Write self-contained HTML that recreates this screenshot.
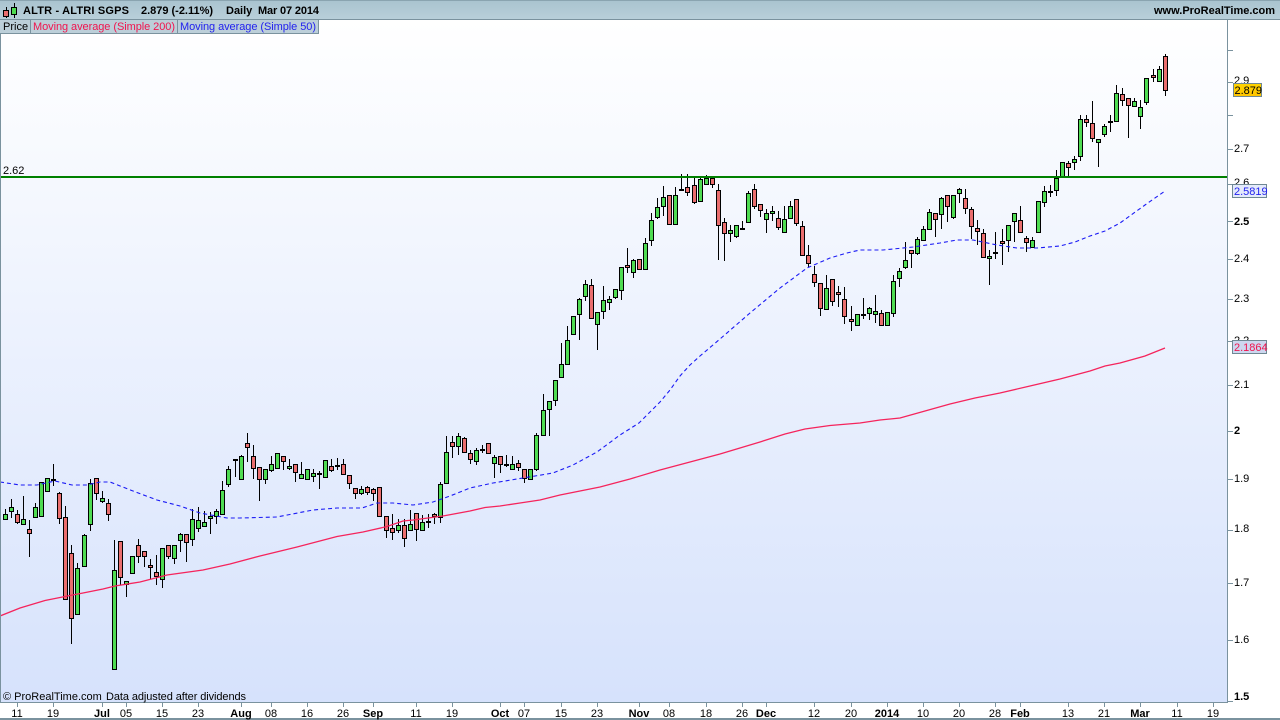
<!DOCTYPE html>
<html>
<head>
<meta charset="utf-8">
<title>ALTR - ALTRI SGPS</title>
<style>
html,body{margin:0;padding:0;background:#fff;width:1280px;height:720px;overflow:hidden}
svg{display:block;position:absolute;left:0;top:0}
text{font-family:"Liberation Sans",Arial,sans-serif;font-size:11px;fill:#000}
.b{font-weight:bold}
.m text{text-anchor:middle}
</style>
</head>
<body>
<svg width="1280" height="720" viewBox="0 0 1280 720" xmlns="http://www.w3.org/2000/svg">
<defs>
<linearGradient id="bg" x1="0" y1="0" x2="0" y2="1"><stop offset="0" stop-color="#ffffff"/><stop offset="1" stop-color="#d6e2fc"/></linearGradient>
<linearGradient id="hd" x1="0" y1="0" x2="0" y2="1"><stop offset="0" stop-color="#a9c3cf"/><stop offset="1" stop-color="#b9d0da"/></linearGradient>
<linearGradient id="gold" x1="0" y1="0" x2="0" y2="1"><stop offset="0" stop-color="#ffd400"/><stop offset="1" stop-color="#ffc400"/></linearGradient>
</defs>
<rect x="0" y="0" width="1280" height="720" fill="#fff"/>
<rect x="1" y="20" width="1226" height="682" fill="url(#bg)"/>

<!-- wicks -->
<path fill="none" stroke="#000" stroke-width="1" d="M5.5 509V520M11.5 499V518M17.5 510V524M23.5 496V524M29.5 520V557M35.5 503V517M41.5 482V516M47.5 478V491M53.5 464V486M59.5 492V524M65.5 506V599M71.5 545V644M77.5 563V614M84.5 534V566M90.5 479V531M96.5 478V500M102.5 491V503M108.5 499V521M114.5 540V669M120.5 541V585M126.5 581V597M132.5 556V573M138.5 539V563M144.5 551V567M150.5 559V579M156.5 555V585M162.5 548V588M168.5 545V559M174.5 545V564M180.5 533V552M186.5 534V562M192.5 509V546M198.5 507V532M204.5 511V527M210.5 512V534M216.5 509V524M222.5 481V514M228.5 466V487M235.5 459V477M241.5 455V479M247.5 433V462M253.5 445V479M259.5 467V501M265.5 469V484M271.5 456V472M277.5 453V468M283.5 456V470M289.5 459V470M295.5 464V482M301.5 462V478M307.5 469V479M313.5 469V482M319.5 471V489M325.5 460V477M331.5 459V472M337.5 458V470M343.5 459V474M349.5 475V489M355.5 488V499M361.5 486V495M367.5 486V495M373.5 488V501M379.5 487V517M386.5 516V538M392.5 514V540M398.5 519V533M404.5 519V547M410.5 510V531M416.5 513V541M422.5 515V530M428.5 514V528M434.5 513V524M440.5 482V523M446.5 436V483M452.5 436V458M458.5 433V455M464.5 437V452M470.5 450V464M476.5 448V465M482.5 445V453M488.5 443V453M494.5 455V478M500.5 456V473M506.5 455V467M512.5 456V470M518.5 460V471M524.5 469V483M530.5 469V479M536.5 433V471M543.5 394V435M549.5 401V436M555.5 380V406M561.5 343V378M567.5 326V364M573.5 316V334M579.5 298V340M585.5 280V301M591.5 279V319M597.5 312V350M603.5 286V319M609.5 296V310M615.5 289V299M621.5 267V300M627.5 248V273M633.5 259V278M639.5 259V269M645.5 238V269M651.5 213V246M657.5 198V219M663.5 186V216M669.5 195V224M675.5 187V224M681.5 174V190M687.5 174V196M694.5 178V204M700.5 177V201M706.5 175V184M712.5 178V188M718.5 184V260M724.5 218V261M730.5 225V242M736.5 225V238M742.5 221V230M748.5 191V222M754.5 184V209M760.5 204V217M766.5 209V233M772.5 206V221M778.5 211V230M784.5 206V232M790.5 201V219M796.5 199V226M802.5 221V255M808.5 245V267M814.5 266V287M820.5 283V316M826.5 275V309M832.5 279V306M838.5 286V307M844.5 287V324M851.5 306V331M857.5 314V325M863.5 298V319M869.5 307V320M875.5 295V323M881.5 310V325M887.5 312V326M893.5 275V317M899.5 268V287M905.5 242V269M911.5 250V268M917.5 237V255M923.5 226V241M929.5 209V230M935.5 213V237M941.5 197V229M947.5 195V222M953.5 195V219M959.5 188V203M965.5 189V214M971.5 207V239M977.5 220V245M983.5 229V257M989.5 250V285M995.5 232V259M1002.5 229V265M1008.5 225V252M1014.5 213V242M1020.5 206V233M1026.5 236V252M1032.5 237V248M1038.5 201V233M1044.5 186V207M1050.5 185V197M1056.5 170V196M1062.5 162V177M1068.5 161V177M1074.5 156V170M1080.5 115V161M1086.5 115V127M1092.5 101V142M1098.5 139V167M1104.5 124V137M1110.5 115V132M1116.5 85V122M1122.5 88V106M1128.5 98V138M1134.5 98V107M1140.5 100V129M1146.5 78V105M1153.5 69V82M1159.5 66V81M1165.5 54V96"/>

<!-- green bodies -->
<path fill="#4fdc52" stroke="#000" stroke-width="1" d="M3.5 514.5h4v5h-4zM9.5 507.5h4v4h-4zM21.5 519.5h4v5h-4zM33.5 507.5h4v10h-4zM39.5 482.5h4v34h-4zM45.5 478.5h4v13h-4zM51.5 479.5h4v1h-4zM75.5 568.5h4v46h-4zM82.5 535.5h4v31h-4zM88.5 483.5h4v41h-4zM100.5 498.5h4v3h-4zM112.5 570.5h4v99h-4zM124.5 581.5h4v3h-4zM130.5 556.5h4v17h-4zM160.5 548.5h4v31h-4zM172.5 545.5h4v13h-4zM178.5 534.5h4v6h-4zM190.5 519.5h4v20h-4zM196.5 520.5h4v8h-4zM202.5 522.5h4v4h-4zM208.5 516.5h4v2h-4zM214.5 511.5h4v5h-4zM220.5 490.5h4v24h-4zM226.5 469.5h4v15h-4zM233.5 459.5h4v1h-4zM239.5 456.5h4v23h-4zM263.5 469.5h4v10h-4zM269.5 464.5h4v6h-4zM275.5 453.5h4v15h-4zM287.5 466.5h4v2h-4zM299.5 474.5h4v4h-4zM305.5 469.5h4v10h-4zM311.5 473.5h4v3h-4zM317.5 473.5h4v1h-4zM323.5 460.5h4v17h-4zM335.5 465.5h4v1h-4zM359.5 489.5h4v4h-4zM396.5 525.5h4v5h-4zM408.5 524.5h4v6h-4zM420.5 522.5h4v8h-4zM426.5 521.5h4v1h-4zM438.5 484.5h4v33h-4zM444.5 452.5h4v31h-4zM456.5 436.5h4v10h-4zM474.5 450.5h4v11h-4zM480.5 449.5h4v1h-4zM492.5 457.5h4v6h-4zM504.5 464.5h4v1h-4zM510.5 464.5h4v5h-4zM528.5 469.5h4v10h-4zM534.5 435.5h4v34h-4zM541.5 410.5h4v25h-4zM547.5 401.5h4v8h-4zM553.5 380.5h4v20h-4zM559.5 364.5h4v13h-4zM565.5 340.5h4v24h-4zM571.5 316.5h4v18h-4zM577.5 299.5h4v15h-4zM583.5 284.5h4v12h-4zM595.5 312.5h4v12h-4zM601.5 300.5h4v11h-4zM607.5 299.5h4v3h-4zM613.5 289.5h4v8h-4zM619.5 267.5h4v23h-4zM631.5 260.5h4v12h-4zM643.5 243.5h4v26h-4zM649.5 220.5h4v20h-4zM655.5 207.5h4v10h-4zM661.5 197.5h4v9h-4zM673.5 195.5h4v29h-4zM679.5 189.5h4v1h-4zM698.5 179.5h4v22h-4zM704.5 178.5h4v6h-4zM728.5 230.5h4v3h-4zM734.5 225.5h4v11h-4zM740.5 228.5h4v1h-4zM746.5 193.5h4v29h-4zM764.5 213.5h4v6h-4zM770.5 211.5h4v2h-4zM782.5 219.5h4v13h-4zM788.5 206.5h4v12h-4zM824.5 288.5h4v21h-4zM855.5 314.5h4v11h-4zM861.5 314.5h4v1h-4zM867.5 308.5h4v5h-4zM873.5 311.5h4v3h-4zM885.5 312.5h4v13h-4zM891.5 281.5h4v32h-4zM897.5 271.5h4v7h-4zM903.5 260.5h4v7h-4zM915.5 239.5h4v14h-4zM921.5 229.5h4v11h-4zM927.5 212.5h4v17h-4zM939.5 198.5h4v16h-4zM951.5 195.5h4v22h-4zM957.5 189.5h4v4h-4zM987.5 256.5h4v2h-4zM993.5 252.5h4v1h-4zM1006.5 225.5h4v15h-4zM1012.5 213.5h4v8h-4zM1030.5 240.5h4v7h-4zM1036.5 201.5h4v31h-4zM1042.5 191.5h4v11h-4zM1048.5 191.5h4v1h-4zM1054.5 178.5h4v12h-4zM1060.5 162.5h4v15h-4zM1072.5 159.5h4v3h-4zM1078.5 119.5h4v37h-4zM1096.5 139.5h4v3h-4zM1102.5 126.5h4v8h-4zM1108.5 121.5h4v1h-4zM1114.5 93.5h4v28h-4zM1132.5 101.5h4v5h-4zM1138.5 107.5h4v9h-4zM1144.5 78.5h4v24h-4zM1157.5 69.5h4v12h-4z"/>

<!-- red bodies -->
<path fill="#ea6e6e" stroke="#000" stroke-width="1" d="M15.5 514.5h4v8h-4zM27.5 529.5h4v4h-4zM57.5 493.5h4v25h-4zM63.5 517.5h4v82h-4zM69.5 553.5h4v65h-4zM94.5 478.5h4v15h-4zM106.5 503.5h4v11h-4zM118.5 541.5h4v36h-4zM136.5 545.5h4v11h-4zM142.5 551.5h4v5h-4zM148.5 565.5h4v2h-4zM154.5 572.5h4v4h-4zM166.5 545.5h4v11h-4zM184.5 534.5h4v8h-4zM245.5 443.5h4v4h-4zM251.5 456.5h4v12h-4zM257.5 467.5h4v12h-4zM281.5 456.5h4v5h-4zM293.5 464.5h4v8h-4zM329.5 466.5h4v4h-4zM341.5 464.5h4v10h-4zM347.5 475.5h4v8h-4zM353.5 488.5h4v5h-4zM365.5 487.5h4v5h-4zM371.5 489.5h4v4h-4zM377.5 487.5h4v29h-4zM384.5 516.5h4v14h-4zM390.5 528.5h4v4h-4zM402.5 525.5h4v13h-4zM414.5 513.5h4v16h-4zM432.5 514.5h4v2h-4zM450.5 442.5h4v4h-4zM462.5 438.5h4v14h-4zM468.5 453.5h4v6h-4zM486.5 443.5h4v10h-4zM498.5 456.5h4v8h-4zM516.5 463.5h4v4h-4zM522.5 469.5h4v9h-4zM589.5 285.5h4v33h-4zM625.5 265.5h4v2h-4zM637.5 259.5h4v10h-4zM667.5 195.5h4v29h-4zM685.5 187.5h4v5h-4zM692.5 185.5h4v17h-4zM710.5 178.5h4v6h-4zM716.5 190.5h4v35h-4zM722.5 222.5h4v11h-4zM752.5 189.5h4v17h-4zM758.5 204.5h4v6h-4zM776.5 218.5h4v9h-4zM794.5 199.5h4v24h-4zM800.5 226.5h4v29h-4zM806.5 255.5h4v8h-4zM812.5 274.5h4v8h-4zM818.5 283.5h4v25h-4zM830.5 279.5h4v22h-4zM836.5 292.5h4v2h-4zM842.5 299.5h4v17h-4zM849.5 319.5h4v2h-4zM879.5 313.5h4v12h-4zM909.5 250.5h4v3h-4zM933.5 213.5h4v6h-4zM945.5 195.5h4v11h-4zM963.5 198.5h4v10h-4zM969.5 209.5h4v17h-4zM975.5 228.5h4v3h-4zM981.5 233.5h4v24h-4zM1000.5 241.5h4v2h-4zM1018.5 220.5h4v12h-4zM1024.5 238.5h4v4h-4zM1066.5 163.5h4v4h-4zM1084.5 119.5h4v3h-4zM1090.5 123.5h4v15h-4zM1120.5 94.5h4v6h-4zM1126.5 98.5h4v7h-4zM1151.5 75.5h4v2h-4zM1163.5 56.5h4v34h-4z"/>

<!-- MA 200 -->
<polyline fill="none" stroke="#f5245c" stroke-width="1.3" points="0,616 20,608 45,600.5 65,596.5 83,593 103,589 115,586 140,582 167,575 203,570 230,564 260,556 297,547 337,536.5 363,532 387,526.5 403,521 413,520 443,516 470,511 485,507.5 500,506 520,503 540,500 560,495 580,491 600,487 630,479 660,470 690,462 720,454 740,448 760,442 785,434 805,429 830,425.5 860,423 880,420 900,418 925,411 950,404 975,398 1000,393 1030,386 1060,379 1090,371 1105,366 1120,363 1145,356 1165,348"/>
<!-- MA 50 -->
<polyline fill="none" stroke="#1a1af5" stroke-width="1.1" stroke-dasharray="4 3" points="0,482 20,485 37,485 55,481 72,485 87,485 100,482 110,482 133,491 157,500 180,506 200,513 227,518 240,518 277,517 313,510 337,508 362,508 377,503 393,503 413,505 433,502 450,496 470,488 493,483 523,478 553,473 573,465 597,452 620,435 639,423 650,412 660,402 670,390 680,376 690,365 700,356 720,339 750,313 780,288 807,268 830,258 847,253 860,250 883,250 913,247 940,243 957,240 973,240 997,245 1017,248 1037,248 1060,246 1075,242 1090,236 1105,231 1120,223 1145,205 1165,191"/>

<!-- support line -->
<rect x="0" y="176" width="1227" height="2" fill="#008000"/>
<text x="3" y="174">2.62</text>

<!-- axis frames -->
<rect x="0" y="20" width="1" height="683" fill="#7a929e"/>
<rect x="1227" y="20" width="1" height="683" fill="#7a929e"/>
<rect x="0" y="702" width="1228" height="1" fill="#7a929e"/>
<rect x="0" y="718" width="1280" height="2" fill="#7a929e"/>

<!-- right ticks -->
<path stroke="#7a929e" stroke-width="1" fill="none" d="M1228 50.5h5M1228 82.5h5M1228 115.5h5M1228 149.5h5M1228 184.5h5M1228 221.5h5M1228 259.5h5M1228 299.5h5M1228 341.5h5M1228 385.5h5M1228 431.5h5M1228 479.5h5M1228 530.5h5M1228 583.5h5M1228 640.5h5M1228 701.5h5"/>
<g>
<text x="1234" y="84">2.9</text>
<text x="1234" y="152">2.7</text>
<text x="1234" y="186">2.6</text>
<text x="1234" y="225" class="b">2.5</text>
<text x="1234" y="262">2.4</text>
<text x="1234" y="302">2.3</text>
<text x="1234" y="344">2.2</text>
<text x="1234" y="388">2.1</text>
<text x="1234" y="434" class="b">2</text>
<text x="1234" y="482">1.9</text>
<text x="1234" y="532">1.8</text>
<text x="1234" y="586">1.7</text>
<text x="1234" y="643">1.6</text>
<text x="1234" y="700" class="b">1.5</text>
</g>

<!-- value tags -->
<rect x="1233.5" y="83.5" width="28" height="13" fill="url(#gold)" stroke="#6f8894"/>
<text x="1234.5" y="94">2.879</text>
<rect x="1232.5" y="184.5" width="34" height="13" fill="#e4eafb" stroke="#6f8894"/>
<text x="1234" y="195" style="fill:#2222ee">2.5819</text>
<rect x="1232.5" y="340.5" width="34" height="13" fill="#cdd7ef" stroke="#6f8894"/>
<text x="1234" y="351" style="fill:#f0144e">2.1864</text>

<!-- bottom ticks -->
<path stroke="#7a929e" stroke-width="1" fill="none" d="M17.5 703v4M53.5 703v4M102.5 703v4M126.5 703v4M162.5 703v4M198.5 703v4M241.5 703v4M271.5 703v4M307.5 703v4M343.5 703v4M373.5 703v4M416.5 703v4M452.5 703v4M500.5 703v4M524.5 703v4M561.5 703v4M597.5 703v4M639.5 703v4M669.5 703v4M706.5 703v4M742.5 703v4M766.5 703v4M814.5 703v4M851.5 703v4M887.5 703v4M923.5 703v4M959.5 703v4M995.5 703v4M1020.5 703v4M1068.5 703v4M1104.5 703v4M1140.5 703v4M1177.5 703v4M1213.5 703v4"/>
<g class="m">
<text x="17" y="717">11</text>
<text x="53" y="717">19</text>
<text x="102" y="717" class="b">Jul</text>
<text x="126" y="717">05</text>
<text x="162" y="717">15</text>
<text x="198" y="717">23</text>
<text x="241" y="717" class="b">Aug</text>
<text x="271" y="717">08</text>
<text x="307" y="717">16</text>
<text x="343" y="717">26</text>
<text x="373" y="717" class="b">Sep</text>
<text x="416" y="717">11</text>
<text x="452" y="717">19</text>
<text x="500" y="717" class="b">Oct</text>
<text x="524" y="717">07</text>
<text x="561" y="717">15</text>
<text x="597" y="717">23</text>
<text x="639" y="717" class="b">Nov</text>
<text x="669" y="717">08</text>
<text x="706" y="717">18</text>
<text x="742" y="717">26</text>
<text x="766" y="717" class="b">Dec</text>
<text x="814" y="717">12</text>
<text x="851" y="717">20</text>
<text x="887" y="717" class="b">2014</text>
<text x="923" y="717">10</text>
<text x="959" y="717">20</text>
<text x="995" y="717">28</text>
<text x="1020" y="717" class="b">Feb</text>
<text x="1068" y="717">13</text>
<text x="1104" y="717">21</text>
<text x="1140" y="717" class="b">Mar</text>
<text x="1177" y="717">11</text>
<text x="1213" y="717">19</text>
</g>

<text x="3" y="700">© ProRealTime.com</text>
<text x="106" y="700" textLength="140" lengthAdjust="spacing">Data adjusted after dividends</text>

<!-- header -->
<rect x="0" y="0" width="1280" height="20" fill="url(#hd)"/>
<rect x="0" y="0" width="1280" height="1" fill="#8aa4b0"/>
<rect x="0" y="19" width="1280" height="1" fill="#7a929e"/>
<path stroke="#000" stroke-width="1" fill="none" d="M6.5 7v11M14.5 3v15"/>
<path stroke="#000" stroke-width="1" d="M3.5 10.5h5v6h-5z" fill="#ea6e6e"/>
<path stroke="#000" stroke-width="1" d="M11.5 7.5h5v7h-5z" fill="#4fdc52"/>
<text x="23" y="14" class="b" textLength="106" lengthAdjust="spacing">ALTR - ALTRI SGPS</text>
<text x="141" y="14" class="b" textLength="72" lengthAdjust="spacing">2.879 (-2.11%)</text>
<text x="226" y="14" class="b">Daily</text>
<text x="258" y="14" class="b" textLength="61" lengthAdjust="spacing">Mar 07 2014</text>
<text x="1154" y="14" class="b">www.ProRealTime.com</text>

<!-- legend -->
<rect x="0" y="20" width="319" height="13" fill="#bccfd9"/>
<rect x="0" y="33" width="319" height="1" fill="#7a929e"/>
<rect x="318" y="20" width="1" height="14" fill="#7a929e"/>
<rect x="30" y="20" width="1" height="14" fill="#7a929e"/>
<rect x="177" y="20" width="1" height="14" fill="#7a929e"/>
<text x="3" y="30">Price</text>
<text x="33" y="30" style="fill:#f0144e" textLength="142" lengthAdjust="spacing">Moving average (Simple 200)</text>
<text x="180" y="30" style="fill:#2222ee" textLength="136" lengthAdjust="spacing">Moving average (Simple 50)</text>
</svg>
</body>
</html>
